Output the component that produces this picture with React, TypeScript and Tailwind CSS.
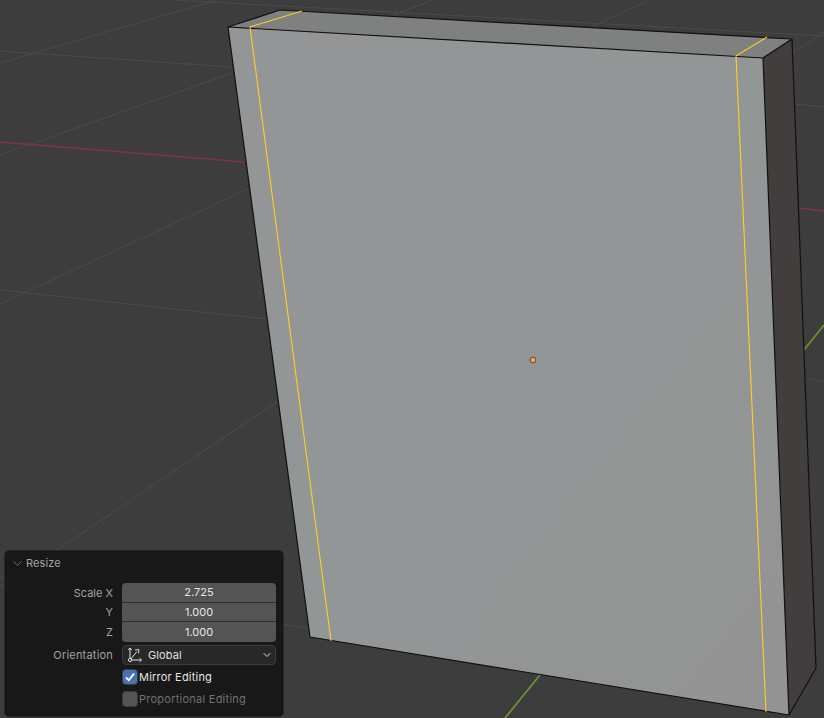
import React from 'react';
import { ChevronDown } from 'lucide-react';

const gridLines = [
  [0, 63, 217, 0],
  [0, 51, 232, 67],
  [0, 155, 232, 73],
  [0, 304, 248, 189],
  [173, 0, 824, 36],
  [433, 0, 393, 15],
  [650, 0, 593, 26],
  [824, 32, 793, 53],
  [795, 104, 824, 107],
  [805, 378, 824, 382],
  [0, 290, 267, 319],
  [57, 550, 278, 401],
  [0, 585, 310, 628],
  [0, 578, 4, 576],
];

const scales = [
  { label: 'Scale X', value: '2.725' },
  { label: 'Y', value: '1.000' },
  { label: 'Z', value: '1.000' },
];

function Viewport() {
  return (
    <svg className="absolute inset-0" width={824} height={718} viewBox="0 0 824 718">
      <defs>
        <linearGradient id="front" x1="0" y1="0" x2="1" y2="1">
          <stop offset="0" stopColor="#939596" />
          <stop offset="0.5" stopColor="#939697" />
          <stop offset="1" stopColor="#939393" />
        </linearGradient>
      </defs>
      {gridLines.map((l, i) => (
        <line key={i} x1={l[0]} y1={l[1]} x2={l[2]} y2={l[3]} stroke="#4b4b4b" strokeWidth="1" />
      ))}
      <line x1="0" y1="142" x2="245" y2="162" stroke="#7f3545" strokeWidth="1.5" />
      <line x1="799" y1="208" x2="824" y2="211" stroke="#7f3545" strokeWidth="1.5" />
      <line x1="804" y1="350" x2="824" y2="325" stroke="#6f962c" strokeWidth="1.7" />
      <line x1="540" y1="675" x2="505" y2="718" stroke="#6f962c" strokeWidth="1.7" />

      <polygon points="228,27 280,10 792,39 763,58" fill="#7f8080" />
      <polygon points="763,58 792,39 816,668 789,715" fill="#413e3d" />
      <polygon points="228,27 763,58 789,715 310,637" fill="url(#front)" />

      <path
        d="M228 27 L280 10 L792 39 L816 668 L789 715 L310 637 Z M228 27 L763 58 L789 715 M763 58 L792 39"
        fill="none"
        stroke="#101010"
        strokeWidth="1.2"
        strokeLinejoin="round"
      />

      <path
        d="M302 11 L250 27 L331 641 M767 37 L736 56 L766 712"
        fill="none"
        stroke="#ffcf24"
        strokeWidth="1.1"
        strokeLinejoin="round"
      />
      <circle cx="533" cy="360" r="3" fill="#f59a35" stroke="#4f4f4f" strokeWidth="1" />
    </svg>
  );
}

function OrientationIcon() {
  return (
    <svg width={16} height={16} viewBox="0 0 16 16" fill="none" stroke="#e0e0e0" strokeWidth="1">
      <path d="M3 1 L3 13 M1.2 3 L3 1 L4.8 3" />
      <path d="M3 13 L14.5 13 M12.6 11.2 L14.5 13 L12.6 14.8" />
      <path d="M3 13 L10 4.5" />
      <path d="M8 3 L12 2.5 L11.5 6.5" strokeWidth="0.9" />
      <circle cx="3" cy="13" r="1.6" fill="#282828" />
    </svg>
  );
}

function Checkbox({ label, checked }: { label: string; checked: boolean }) {
  return (
    <div className="ml-[117.5px] flex h-[22px] items-center gap-[2.5px]">
      <span
        className={
          checked
            ? 'flex h-[14px] w-[14px] items-center justify-center rounded-[3px] bg-[#4772b3] ring-1 ring-[#3d3d3d]'
            : 'flex h-[14px] w-[14px] items-center justify-center rounded-[3px] bg-[#545454] ring-1 ring-[#3a3a3a]'
        }
      >
        {checked && (
          <svg width={12} height={12} viewBox="0 0 12 12" fill="none" stroke="#ffffff" strokeWidth="1.8">
            <path d="M2 6.5 L4.8 9.2 L10 2.6" />
          </svg>
        )}
      </span>
      <span className={checked ? 'pt-[1px] tracking-[0.2px] text-[#e6e6e6]' : 'pt-[1px] tracking-[0.25px] text-[#717171]'}>{label}</span>
    </div>
  );
}

export default function App() {
  return (
    <div className="relative h-[718px] w-[824px] overflow-hidden bg-[#3d3d3d] font-['Inter',sans-serif] text-[11px] leading-none">
      <Viewport />

      <div className="absolute bottom-[1px] left-[4px] flex h-[167px] w-[280px] flex-col rounded-[5px] border border-[#242424] bg-[#181818]">
        <div className="flex h-[25px] shrink-0 items-center gap-[1px] pl-[5px] text-[#a3a3a3]">
          <ChevronDown size={15} strokeWidth={1} className="text-[#9a9a9a]" />
          <span className="tracking-[0.1px]">Resize</span>
        </div>

        <div className="mt-[7px] flex flex-col">
          <div className="flex">
            <div className="flex w-[108px] flex-col text-right text-[#a3a3a3]">
              {scales.map((s) => (
                <div key={s.label} className="flex h-[19.67px] items-center justify-end pt-[1px]">
                  {s.label}
                </div>
              ))}
            </div>
            <div className="ml-[9px] flex w-[154px] flex-col divide-y divide-[#2e2e2e] overflow-hidden rounded-[4px] bg-[#545454] text-[#e6e6e6]">
              {scales.map((s) => (
                <div key={s.label} className="flex h-[19.67px] items-center justify-center pt-[1px]">
                  {s.value}
                </div>
              ))}
            </div>
          </div>

          <div className="mt-[3px] flex items-center">
            <div className="w-[108px] pt-[1px] text-right tracking-[0.2px] text-[#a3a3a3]">Orientation</div>
            <div className="ml-[9px] flex h-[20px] w-[154px] items-center rounded-[4px] border border-[#3d3d3d] bg-[#282828] pl-[4px] pr-[2px] text-[#e0e0e0]">
              <OrientationIcon />
              <span className="ml-[5px] flex-1 pt-[1px] tracking-[0.1px]">Global</span>
              <ChevronDown size={12} strokeWidth={2} />
            </div>
          </div>

          <div className="mt-[1px] flex flex-col">
            <Checkbox label="Mirror Editing" checked />
            <Checkbox label="Proportional Editing" checked={false} />
          </div>
        </div>
      </div>
    </div>
  );
}
